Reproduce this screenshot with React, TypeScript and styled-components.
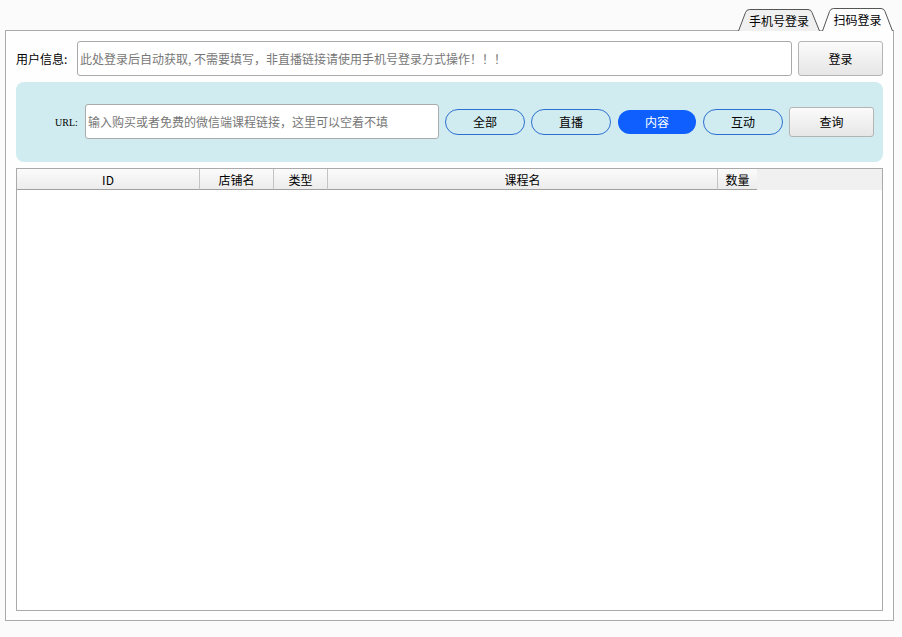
import styled, { createGlobalStyle } from "styled-components";

const GlobalStyle = createGlobalStyle`
  html, body {
    margin: 0;
    padding: 0;
    background: #fbfbfb;
  }
  body {
    font-family: "Noto Sans CJK SC", "Liberation Sans", sans-serif;
    font-size: 12px;
    color: #000;
  }
`;

// full-width punctuation written as escapes so it can't get normalised to ascii
const COMMA = "\uFF0C";
const BANG = "\uFF01";
const loginHint = `此处登录后自动获取, 不需要填写${COMMA}非直播链接请使用手机号登录方式操作${BANG}${BANG}${BANG}`;
const urlHint = `输入购买或者免费的微信端课程链接${COMMA}这里可以空着不填`;

const tabs = [
  { label: "手机号登录", active: false, width: 82, height: 22 },
  { label: "扫码登录", active: true, width: 71, height: 23 },
];

const filters = [
  { label: "全部", active: false },
  { label: "直播", active: false },
  { label: "内容", active: true },
  { label: "互动", active: false },
];

const columns = [
  { label: "ID", width: 183 },
  { label: "店铺名", width: 74 },
  { label: "类型", width: 54 },
  { label: "课程名", width: 390 },
  { label: "数量", width: 39 },
];

type TabProps = { label: string; active: boolean; width: number; height: number };

const Tab = ({ label, active, width, height }: TabProps) => (
  <TabItem $width={width} $height={height}>
    <TabShape viewBox={`0 0 ${width} ${height}`}>
      <path
        d={`M0.5 ${height} L7.5 3.5 Q8.5 0.5 11.5 0.5 L${width - 12} 0.5 Q${width - 9} 0.5 ${width - 8} 3.5 L${width - 0.5} ${height}`}
        fill={active ? "#fefefe" : "#f0f0f0"}
        stroke="#555"
      />
    </TabShape>
    <TabLabel>{label}</TabLabel>
  </TabItem>
);

export default function App() {
  return (
    <Page>
      <GlobalStyle />
      <TabBar>
        {tabs.map((t) => (
          <Tab key={t.label} {...t} />
        ))}
      </TabBar>
      <Panel>
        <LoginRow>
          <FieldLabel>用户信息:</FieldLabel>
          <LoginInput placeholder={loginHint} />
          <LoginButton>登录</LoginButton>
        </LoginRow>
        <SearchBand>
          <UrlLabel>URL:</UrlLabel>
          <UrlInput placeholder={urlHint} />
          <Filters>
            {filters.map((f) => (
              <FilterButton key={f.label} $active={f.active}>
                {f.label}
              </FilterButton>
            ))}
          </Filters>
          <QueryButton>查询</QueryButton>
        </SearchBand>
        <TableBox>
          <TableHead>
            {columns.map((c) => (
              <HeadCell key={c.label} $width={c.width}>
                {c.label}
              </HeadCell>
            ))}
          </TableHead>
        </TableBox>
      </Panel>
    </Page>
  );
}

const Page = styled.div`
  width: 902px;
  height: 637px;
  overflow: hidden;
`;

const TabBar = styled.div`
  height: 31px;
  width: 893px;
  display: flex;
  justify-content: flex-end;
  align-items: flex-end;
  gap: 2px;
  margin-bottom: -1px;
  position: relative;
  z-index: 1;
`;

const TabItem = styled.div<{ $width: number; $height: number }>`
  position: relative;
  box-sizing: border-box;
  width: ${(p) => p.$width}px;
  height: ${(p) => p.$height}px;
  padding-top: 1px;
  display: flex;
  align-items: center;
  justify-content: center;
`;

const TabShape = styled.svg`
  position: absolute;
  inset: 0;
  width: 100%;
  height: 100%;
`;

const TabLabel = styled.span`
  position: relative;
  line-height: 20px;
`;

const Panel = styled.div`
  box-sizing: border-box;
  margin-left: 5px;
  width: 889px;
  height: 591px;
  border: 1px solid #aaa;
  background: #fefefe;
  padding: 10px 10px 9px 10px;
  display: flex;
  flex-direction: column;
`;

const LoginRow = styled.div`
  display: flex;
  align-items: center;
  height: 35px;
`;

const FieldLabel = styled.label`
  width: 61px;
  white-space: nowrap;
`;

const LoginInput = styled.input`
  box-sizing: border-box;
  width: 715px;
  height: 35px;
  margin-right: 6px;
  padding: 0 2px;
  border: 1px solid #aaa;
  border-radius: 3px;
  background: #fff;
  font: inherit;
  &::placeholder {
    color: #777;
    opacity: 1;
  }
`;

const GreyButton = styled.button`
  box-sizing: border-box;
  border: 1px solid #b4b4b4;
  border-radius: 3px;
  background: linear-gradient(#fbfbfb, #e6e6e6);
  font: inherit;
  color: #000;
  padding: 0 0 1px;
`;

const LoginButton = styled(GreyButton)`
  width: 85px;
  height: 35px;
`;

const SearchBand = styled.div`
  margin-top: 6px;
  height: 80px;
  border-radius: 8px;
  background: #d0ecf1;
  display: flex;
  align-items: center;
`;

const UrlLabel = styled.label`
  width: 69px;
  box-sizing: border-box;
  padding-left: 39px;
  font-family: "Liberation Serif", serif;
  font-size: 10px;
  white-space: nowrap;
`;

const UrlInput = styled.input`
  box-sizing: border-box;
  width: 354px;
  height: 35px;
  margin-bottom: 2px;
  padding: 0 2px;
  border: 1px solid #aaa;
  border-radius: 3px;
  background: #fff;
  font: inherit;
  &::placeholder {
    color: #777;
    opacity: 1;
  }
`;

const Filters = styled.div`
  display: flex;
  align-items: center;
  gap: 6px;
  margin-left: 6px;
`;

const FilterButton = styled.button<{ $active: boolean }>`
  box-sizing: border-box;
  width: ${(p) => (p.$active ? 78 : 80)}px;
  height: ${(p) => (p.$active ? 24 : 26)}px;
  margin: 0 ${(p) => (p.$active ? 1 : 0)}px;
  border: ${(p) => (p.$active ? "none" : "1px solid #2b6fd0")};
  border-radius: 13px;
  background: ${(p) => (p.$active ? "#0f5fff" : "transparent")};
  color: ${(p) => (p.$active ? "#fff" : "#000")};
  font: inherit;
  padding: 0 0 2px;
`;

const QueryButton = styled(GreyButton)`
  width: 85px;
  height: 30px;
  margin-left: 6px;
`;

const TableBox = styled.div`
  box-sizing: border-box;
  margin-top: 6px;
  flex: 1;
  border: 1px solid #aaa;
  background: #fff;
`;

const TableHead = styled.div`
  display: flex;
  height: 21px;
  background: #f0f0f0;
`;

const HeadCell = styled.div<{ $width: number }>`
  box-sizing: border-box;
  width: ${(p) => p.$width}px;
  height: 21px;
  line-height: 21px;
  text-align: center;
  background: linear-gradient(#fbfbfb, #ececec);
  border-right: 1px solid #c4c4c4;
  border-bottom: 1px solid #a0a0a0;
  &:last-child {
    border-right: none;
  }
`;
